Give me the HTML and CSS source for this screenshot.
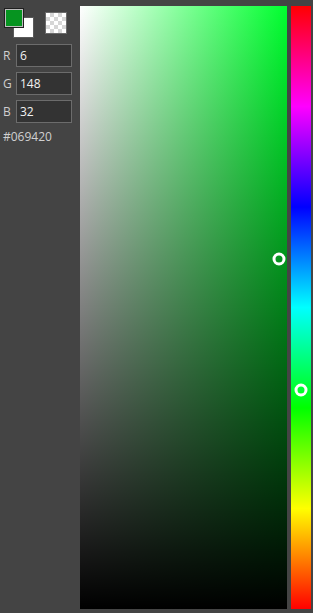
FILE: index.html
```html
<!DOCTYPE html>
<html lang="en">
<head>
  <meta charset="UTF-8">
  <title>Color picker</title>
  <link rel="stylesheet" href="styles.css">
</head>
<body>
  <div class="picker">
    <div class="side">
      <div class="swatches">
        <div class="swatch-stack">
          <span class="swatch secondary"></span>
          <span class="swatch primary"></span>
        </div>
        <span class="swatch clear"></span>
      </div>
      <label class="channel"><span class="channel-name">R</span><input type="text" value="6"></label>
      <label class="channel"><span class="channel-name">G</span><input type="text" value="148"></label>
      <label class="channel"><span class="channel-name">B</span><input type="text" value="32"></label>
      <div class="hex">#069420</div>
    </div>
    <div class="sv-area">
      <span class="knob" style="left: 96%; top: 42%"></span>
    </div>
    <div class="hue-bar">
      <span class="knob" style="left: 50%; top: 63.6%"></span>
    </div>
  </div>
</body>
</html>
```
FILE: styles.css
```css
body { margin: 0; background: #444; font-family: "Open Sans", "Noto Sans", sans-serif; font-size: 12px; color: #d4d4d4; }
.picker {
  display: flex;
  height: 613px;
  box-sizing: border-box;
  padding: 6px 2px 4px 0;
  gap: 4px;
}
.side {
  width: 76px;
  flex-shrink: 0;
  display: flex;
  flex-direction: column;
}
.swatches {
  display: flex;
  align-items: flex-start;
  height: 33px;
  gap: 11px;
  padding-left: 4px;
}
.swatch-stack {
  position: relative;
  width: 30px;
  height: 32px;
  margin-top: 2px;
}
.swatch { display: block; box-sizing: border-box; }
.swatch.primary {
  position: absolute;
  left: 0;
  top: 0;
  width: 20px;
  height: 20px;
  background: #069420;
  border: 1px solid #1f1f1f;
  box-shadow: inset 0 0 0 1px #bdbdbd;
}
.swatch.secondary {
  position: absolute;
  left: 9px;
  top: 9px;
  width: 21px;
  height: 21px;
  background: #fff;
  border: 1px solid #5a5a5a;
}
.swatch.clear {
  width: 22px;
  height: 22px;
  margin-top: 6px;
  border: 1px solid #6a6a6a;
  background-color: #fff;
  background-image:
    linear-gradient(45deg, #d6d6d6 25%, transparent 25%, transparent 75%, #d6d6d6 75%),
    linear-gradient(45deg, #d6d6d6 25%, transparent 25%, transparent 75%, #d6d6d6 75%);
  background-size: 8px 8px;
  background-position: 0 0, 4px 4px;
}
.channel {
  display: flex;
  align-items: center;
  height: 23px;
  margin-top: 5px;
  padding-left: 3px;
}
.channel-name { width: 13px; color: #cfcfcf; }
.channel input {
  width: 56px;
  height: 23px;
  box-sizing: border-box;
  border: 1px solid #6c6c6c;
  background: #333;
  color: #f2f2f2;
  font: inherit;
  padding: 0 3px;
  margin: 0;
  outline: none;
}
.hex { margin-top: 5px; padding-left: 3px; color: #d0d0d0; }
.sv-area {
  position: relative;
  flex: 1;
  background:
    linear-gradient(to top, #000, rgba(0, 0, 0, 0)),
    linear-gradient(to right, #fff, hsl(131, 100%, 50%));
}
.hue-bar {
  position: relative;
  width: 20px;
  flex-shrink: 0;
  background: linear-gradient(to bottom, #f00 0%, #f0f 16.67%, #00f 33.33%, #0ff 50%, #0f0 66.67%, #ff0 83.33%, #f00 100%);
}
.knob {
  position: absolute;
  width: 13px;
  height: 13px;
  box-sizing: border-box;
  border: 3px solid #fff;
  border-radius: 50%;
  transform: translate(-50%, -50%);
}
```
